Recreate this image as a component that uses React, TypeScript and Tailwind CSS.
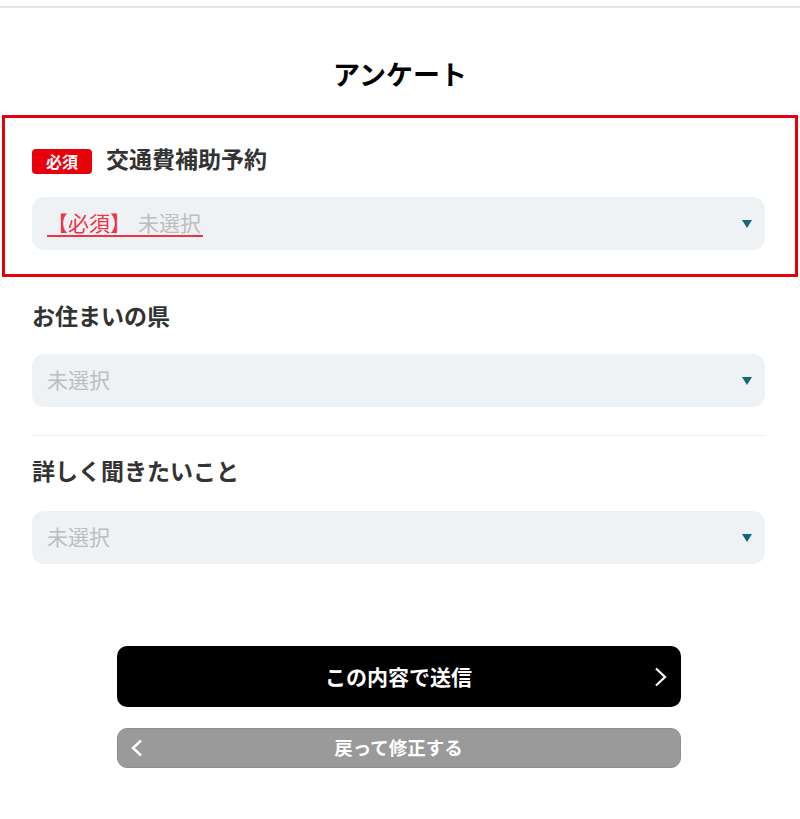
/* Survey confirm form — アンケート */
const FONT = "font-['Noto_Sans_CJK_JP','Noto_Sans',sans-serif]";

function Caret() {
  return (
    <svg width="10" height="8" viewBox="0 0 10 8" className="shrink-0">
      <path d="M0 0 H10 L5 8 Z" fill="#17657d" />
    </svg>
  );
}

function SelectBox({ required }: { required?: boolean }) {
  return (
    <div className="flex h-[53px] items-center justify-between rounded-[12px] bg-[#eff2f5] pl-[15px] pr-[13px]">
      {required ? (
        <span className="relative -top-[1px] inline-block border-b-2 border-[#ee3346] pr-[2px] text-[21px] leading-[26px]">
          <span className="text-[#ee3346]">【必須】</span>
          <span className="ml-[7px] text-[#bdbdbd]">未選択</span>
        </span>
      ) : (
        <span className="relative -top-[1px] text-[21px] leading-[27px] text-[#bdbdbd]">未選択</span>
      )}
      <Caret />
    </div>
  );
}

function Label({ text, required }: { text: string; required?: boolean }) {
  return (
    <div className="flex h-[32px] items-center gap-[14px]">
      {required && (
        <span className="flex h-[25px] w-[60px] items-center justify-center rounded-[4px] bg-[#e8000b] text-[16px] font-bold leading-none text-white">
          必須
        </span>
      )}
      <span className="relative -top-[3px] text-[23px] font-bold leading-[32px] text-[#333333]">{text}</span>
    </div>
  );
}

export default function App() {
  return (
    <div className={`min-h-screen bg-white ${FONT}`}>
      <div className="pt-[6px]">
        <div className="h-[2px] bg-[#e2e2e2]" />
      </div>

      <h1 className="mt-[46px] text-center text-[27px] font-bold leading-[39px] text-black">アンケート</h1>

      {/* Required question, highlighted */}
      <div className="mt-[22px] px-[2px]">
        <div className="border-[3px] border-[#e8000b] pb-[24px] pl-[27px] pr-[30px] pt-[27px]">
          <Label text="交通費補助予約" required />
          <div className="mt-[20px]">
            <SelectBox required />
          </div>
        </div>
      </div>

      <div className="pl-[32px] pr-[35px]">
        <div className="mt-[25px]">
          <Label text="お住まいの県" />
          <div className="mt-[20px]">
            <SelectBox />
          </div>
        </div>

        <div className="mt-[28px] h-px bg-[#ececec]" />

        <div className="mt-[21px]">
          <Label text="詳しく聞きたいこと" />
          <div className="mt-[22px]">
            <SelectBox />
          </div>
        </div>

        {/* Actions */}
        <div className="mx-auto mt-[82px] w-[564px]">
          <button className="relative flex h-[61px] w-full items-center justify-center rounded-[10px] bg-black text-[21px] font-bold text-white">
            この内容で送信
            <svg
              width="13"
              height="20"
              viewBox="0 0 13 20"
              className="absolute right-[14px] top-1/2 -translate-y-1/2"
            >
              <path d="M2 1.5 L11 10 L2 18.5" fill="none" stroke="white" strokeWidth="2.2" />
            </svg>
          </button>
          <button className="relative mt-[21px] flex h-[40px] w-full items-center justify-center rounded-[10px] border border-[#8e8e8e] bg-[#9a9a9a] text-[18.5px] font-bold text-white">
            戻って修正する
            <svg
              width="13"
              height="18"
              viewBox="0 0 13 18"
              className="absolute left-[12px] top-1/2 -translate-y-1/2"
            >
              <path d="M11 1.5 L3 9 L11 16.5" fill="none" stroke="white" strokeWidth="2.4" />
            </svg>
          </button>
        </div>
      </div>
    </div>
  );
}
